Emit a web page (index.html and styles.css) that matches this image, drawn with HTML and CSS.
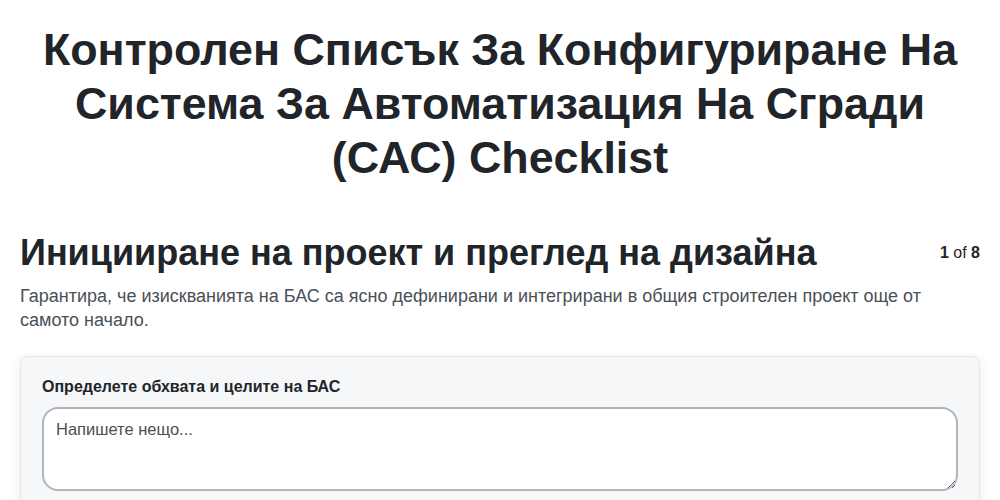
FILE: index.html
```html
<!DOCTYPE html>
<html lang="bg">
<head>
<meta charset="utf-8">
<link rel="stylesheet" href="styles.css">
</head>
<body>
<div class="page">
  <h1 class="title">Контролен Списък За Конфигуриране На Система За Автоматизация На Сгради (САС) Checklist</h1>
  <section class="step">
    <div class="step-head">
      <h2 class="step-title">Иницииране на проект и преглед на дизайна</h2>
      <div class="counter"><b>1</b> of <b>8</b></div>
    </div>
    <p class="step-desc">Гарантира, че изискванията на БАС са ясно дефинирани и интегрирани в общия строителен проект още от самото начало.</p>
    <div class="card">
      <label class="field-label" for="f1">Определете обхвата и целите на БАС</label>
      <textarea id="f1" class="field" placeholder="Напишете нещо..."></textarea>
    </div>
  </section>
</div>
</body>
</html>
```

FILE: styles.css
```css
* { box-sizing: border-box; }
html, body { margin: 0; padding: 0; background: #fff; }
body {
  font-family: "Liberation Sans", Arial, sans-serif;
  color: #212529;
}
.page {
  padding: 23px 20px 0;
}
.title {
  margin: 0 0 47px;
  font-size: 44.8px;
  line-height: 1.2;
  font-weight: 700;
  text-align: center;
  color: #212529;
}
.step-head {
  display: flex;
  justify-content: space-between;
  align-items: flex-start;
}
.step-title {
  margin: 0;
  font-size: 36px;
  line-height: 1.2;
  font-weight: 700;
  color: #212529;
}
.counter {
  font-size: 16px;
  line-height: 18px;
  color: #212529;
  padding-top: 13px;
}
.counter b { font-weight: 700; }
.step-desc {
  margin: 10px 0 24px;
  font-size: 18px;
  line-height: 24px;
  color: #495057;
}
.card {
  background: #f6f7f9;
  border: 1px solid #e4e6ea;
  border-radius: 8px;
  box-shadow: 0 2px 12px rgba(0,0,0,0.08);
  padding: 20px 21px 20px;
}
.field-label {
  display: block;
  font-size: 16px;
  font-weight: 700;
  line-height: 20px;
  color: #212529;
  margin-bottom: 10px;
}
.field {
  display: block;
  width: 100%;
  height: 84px;
  border: 2px solid #adb5bd;
  border-radius: 16px;
  background: #fff;
  padding: 11px 12px;
  font-family: "Liberation Sans", Arial, sans-serif;
  font-size: 16.5px;
  color: #212529;
  resize: vertical;
}
.field::placeholder { color: #4a4f55; opacity: 1; }
```
